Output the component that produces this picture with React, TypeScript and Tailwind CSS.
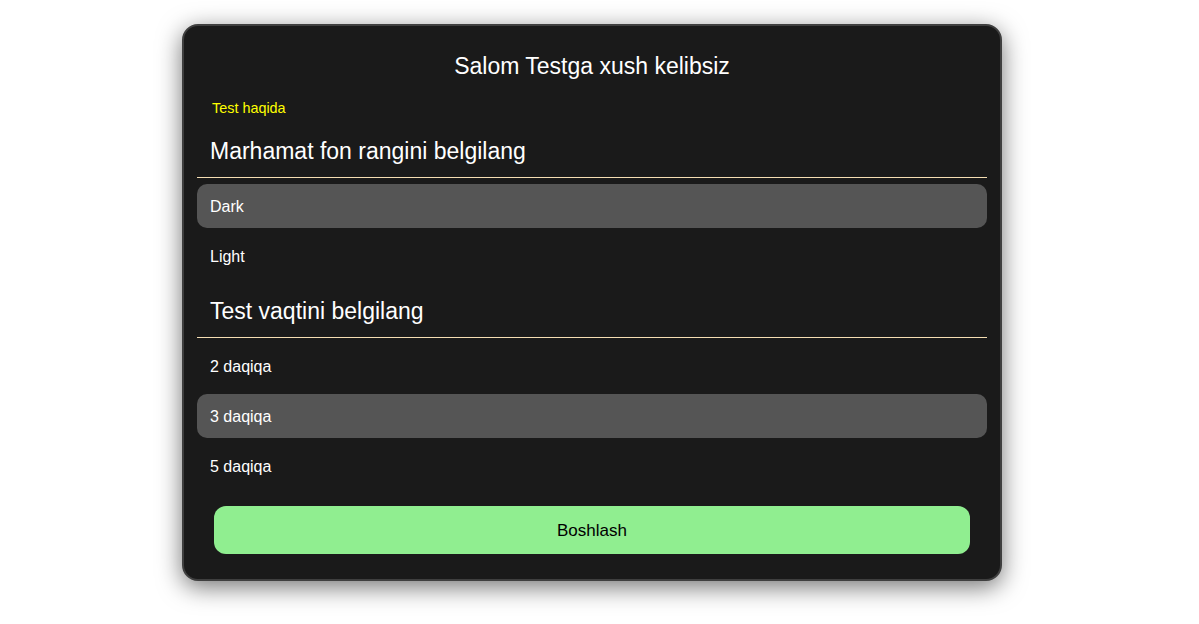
import { useState } from 'react';

const themes = ['Dark', 'Light'];
const times = ['2 daqiqa', '3 daqiqa', '5 daqiqa'];

function Option({ label, active, onClick }: { label: string; active: boolean; onClick: () => void }) {
    return (
        <div
            onClick={onClick}
            className={`h-[44px] flex items-center px-[13px] pt-[2px] rounded-[10px] text-[16px] text-white cursor-pointer ${
                active ? 'bg-[#555555]' : ''
            }`}
        >
            {label}
        </div>
    );
}

export default function App() {
    const [theme, setTheme] = useState('Dark');
    const [time, setTime] = useState('3 daqiqa');

    return (
        <div
            className="min-h-[624px] w-[1184px] bg-white flex justify-center pt-[24px]"
            style={{ fontFamily: '"Liberation Sans", Arial, sans-serif' }}
        >
            <div className="w-[820px] h-[557px] bg-[#1a1a1a] border-2 border-[#3f3f3f] rounded-[16px] shadow-[0_6px_24px_rgba(0,0,0,0.55)] px-[13px] pt-[26px] pb-[25px] flex flex-col">
                <h1 className="text-[23px] leading-[28px] text-white text-center">Salom Testga xush kelibsiz</h1>
                <p className="mt-[20px] ml-[15px] text-[14.4px] leading-[17px] text-[#ffff00]">Test haqida</p>

                <h2 className="pt-[20px] pb-[12px] px-[13px] text-[23px] leading-[28px] text-white border-b border-[#f5deb3]">
                    Marhamat fon rangini belgilang
                </h2>
                <div className="mt-[6px] flex flex-col gap-[6px]">
                    {themes.map((t) => (
                        <Option key={t} label={t} active={theme === t} onClick={() => setTheme(t)} />
                    ))}
                </div>

                <h2 className="pt-[19px] pb-[12px] px-[13px] text-[23px] leading-[28px] text-white border-b border-[#f5deb3]">
                    Test vaqtini belgilang
                </h2>
                <div className="mt-[6px] flex flex-col gap-[6px]">
                    {times.map((t) => (
                        <Option key={t} label={t} active={time === t} onClick={() => setTime(t)} />
                    ))}
                </div>

                <button className="mt-[18px] mx-[17px] h-[48px] pt-[2px] rounded-[12px] bg-[#90ee90] text-black text-[17px]">
                    Boshlash
                </button>
            </div>
        </div>
    );
}
